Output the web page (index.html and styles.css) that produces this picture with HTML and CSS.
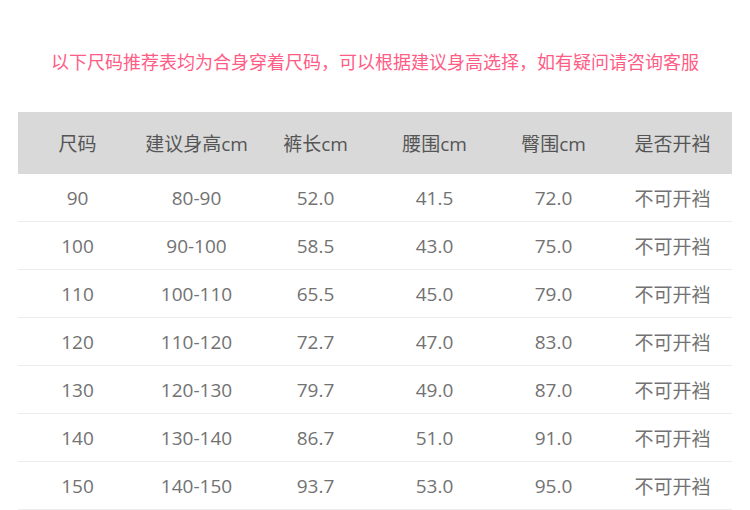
FILE: index.html
```html
<!DOCTYPE html>
<html lang="zh">
<head>
<meta charset="utf-8">
<link rel="stylesheet" href="styles.css">
</head>
<body>
<div class="page">
  <p class="note">以下尺码推荐表均为合身穿着尺码，可以根据建议身高选择，如有疑问请咨询客服</p>
  <table class="size-table">
    <thead>
      <tr><th>尺码</th><th>建议身高cm</th><th>裤长cm</th><th>腰围cm</th><th>臀围cm</th><th>是否开裆</th></tr>
    </thead>
    <tbody>
      <tr><td>90</td><td>80-90</td><td>52.0</td><td>41.5</td><td>72.0</td><td>不可开裆</td></tr>
      <tr><td>100</td><td>90-100</td><td>58.5</td><td>43.0</td><td>75.0</td><td>不可开裆</td></tr>
      <tr><td>110</td><td>100-110</td><td>65.5</td><td>45.0</td><td>79.0</td><td>不可开裆</td></tr>
      <tr><td>120</td><td>110-120</td><td>72.7</td><td>47.0</td><td>83.0</td><td>不可开裆</td></tr>
      <tr><td>130</td><td>120-130</td><td>79.7</td><td>49.0</td><td>87.0</td><td>不可开裆</td></tr>
      <tr><td>140</td><td>130-140</td><td>86.7</td><td>51.0</td><td>91.0</td><td>不可开裆</td></tr>
      <tr><td>150</td><td>140-150</td><td>93.7</td><td>53.0</td><td>95.0</td><td>不可开裆</td></tr>
    </tbody>
  </table>
</div>
</body>
</html>
```
FILE: styles.css
```css
html, body {
  margin: 0;
  padding: 0;
  background: #ffffff;
}
.page {
  width: 750px;
  font-family: "Open Sans", "Noto Sans CJK SC", sans-serif;
}
.note {
  margin: 0;
  padding: 50px 0 0;
  height: 62px;
  text-align: center;
  color: #ff5c86;
  font-size: 18px;
  line-height: 24px;
}
.size-table {
  margin-left: 18px;
  width: 714px;
  border-collapse: collapse;
  table-layout: fixed;
}
.size-table th {
  background: #d9d9d9;
  height: 62px;
  padding: 0;
  font-weight: normal;
  font-size: 19px;
  color: #555555;
  text-align: center;
}
.size-table td {
  height: 47px;
  padding: 0;
  border-bottom: 1px solid #ececec;
  font-size: 19px;
  color: #727272;
  text-align: center;
}
```
